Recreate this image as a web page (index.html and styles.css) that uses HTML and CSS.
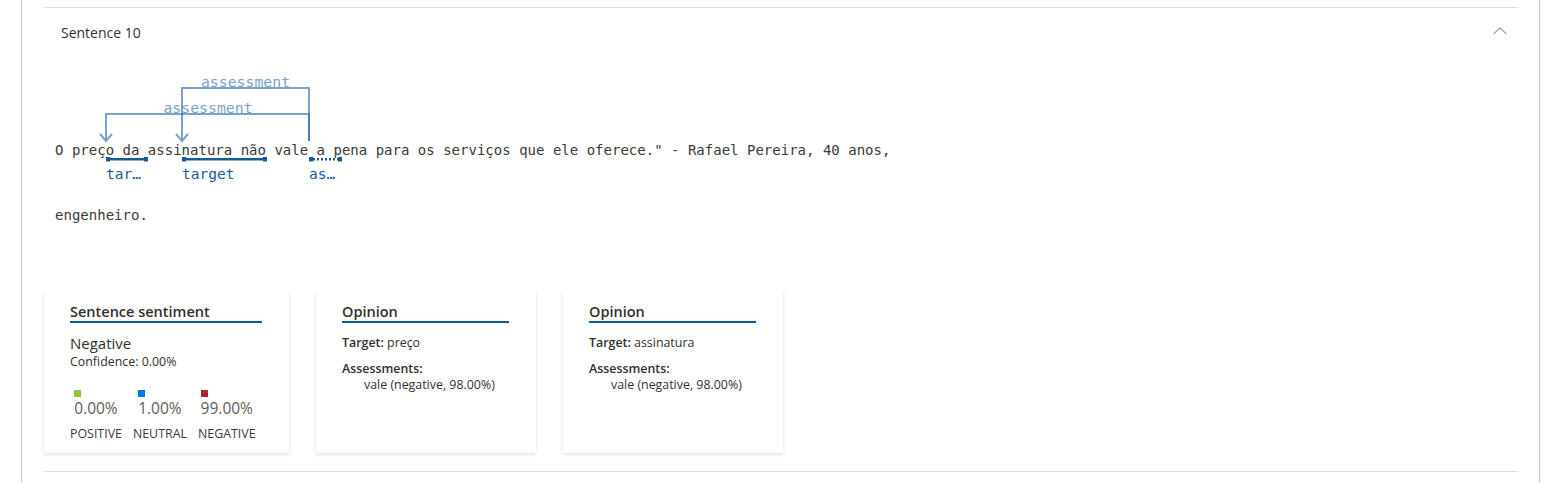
FILE: index.html
```html
<!DOCTYPE html>
<html>
<head>
<meta charset="utf-8">
<link rel="stylesheet" href="styles.css">
</head>
<body>
<div class="frame">
  <div class="section">
    <div class="header">
      <span class="title">Sentence 10</span>
      <svg class="chevron" width="14" height="8" viewBox="0 0 14 8"><path d="M0.5 7 L7 0.8 L13.5 7" fill="none" stroke="#605e5c" stroke-width="1"/></svg>
    </div>
    <div class="sentence">
      <div class="line line-annotated">
        <svg class="annot" width="420" height="140" viewBox="0 0 420 140">
          <g class="arcs" fill="none" stroke="#2b6cab" stroke-width="2" opacity="0.62">
            <path d="M138 81 V28 H265 V81"/>
            <path d="M132 74 L138 81 L144 74"/>
          </g>
          <text class="arc-label" x="201.5" y="27" text-anchor="middle">assessment</text>
          <g class="arcs" fill="none" stroke="#2b6cab" stroke-width="2" opacity="0.62">
            <path d="M62 81 V54 H265 V81"/>
            <path d="M56 74 L62 81 L68 74"/>
          </g>
          <text class="arc-label" x="164" y="53" text-anchor="middle">assessment</text>
          <g fill="#175a9b">
            <rect x="62" y="98" width="42" height="2.5"/>
            <rect x="62" y="97" width="4" height="4.5"/>
            <rect x="100" y="97" width="4" height="4.5"/>
            <rect x="138" y="98" width="85" height="2.5"/>
            <rect x="138" y="97" width="4" height="4.5"/>
            <rect x="219" y="97" width="4" height="4.5"/>
            <rect x="265" y="97" width="4" height="4.5"/>
            <rect x="294" y="97" width="4" height="4.5"/>
          </g>
          <line x1="269" y1="99.2" x2="294" y2="99.2" stroke="#175a9b" stroke-width="2.5" stroke-dasharray="2 2"/>
          <text class="tag-label" x="62" y="119">tar…</text>
          <text class="tag-label" x="138" y="119">target</text>
          <text class="tag-label" x="265" y="119">as…</text>
        </svg>
        <span class="mono">O preço da assinatura não vale a pena para os serviços que ele oferece." - Rafael Pereira, 40 anos,</span>
      </div>
      <div class="line">
        <span class="mono">engenheiro.</span>
      </div>
    </div>
    <div class="cards">
      <div class="card card-wide">
        <div class="card-title">Sentence sentiment</div>
        <div class="sent-label">Negative</div>
        <div class="small conf">Confidence: 0.00%</div>
        <div class="scores">
          <div class="score">
            <div class="score-top"><span class="swatch pos"></span><span class="pct">0.00%</span></div>
            <span class="cat">POSITIVE</span>
          </div>
          <div class="score">
            <div class="score-top"><span class="swatch neu"></span><span class="pct">1.00%</span></div>
            <span class="cat">NEUTRAL</span>
          </div>
          <div class="score">
            <div class="score-top"><span class="swatch neg"></span><span class="pct">99.00%</span></div>
            <span class="cat">NEGATIVE</span>
          </div>
        </div>
      </div>
      <div class="card">
        <div class="card-title">Opinion</div>
        <div class="small target"><b>Target:</b> preço</div>
        <div class="small assess"><b>Assessments:</b></div>
        <div class="small indent">vale (negative, 98.00%)</div>
      </div>
      <div class="card">
        <div class="card-title">Opinion</div>
        <div class="small target"><b>Target:</b> assinatura</div>
        <div class="small assess"><b>Assessments:</b></div>
        <div class="small indent">vale (negative, 98.00%)</div>
      </div>
    </div>
  </div>
</div>
</body>
</html>
```

FILE: styles.css
```css
html, body {
  margin: 0;
  padding: 0;
  background: #ffffff;
}
body {
  font-family: "Open Sans", "Noto Sans", sans-serif;
  color: #323130;
  height: 483px;
  overflow: hidden;
}
.frame {
  margin-left: 21px;
  width: 1519px;
  height: 483px;
  border-left: 1px solid #c8c6c4;
  border-right: 1px solid #c8c6c4;
  padding: 7px 21px 0 22px;
  box-sizing: border-box;
}
.section {
  border-top: 1px solid #e1dfdd;
  border-bottom: 1px solid #e1dfdd;
  height: 465px;
  box-sizing: border-box;
  display: flex;
  flex-direction: column;
}
.header {
  display: flex;
  align-items: center;
  justify-content: space-between;
  height: 48px;
  padding: 0 11px 0 17px;
}
.title {
  font-size: 14px;
  color: #323130;
}
.chevron {
  display: block;
  margin-top: -2px;
}
.sentence {
  padding-left: 11px;
  display: flex;
  flex-direction: column;
}
.line {
  height: 20px;
  line-height: 20px;
}
.line-annotated {
  position: relative;
  padding-top: 83px;
  padding-bottom: 45px;
}
.annot {
  position: absolute;
  left: -11px;
  top: 4px;
  overflow: visible;
}
.mono {
  font-family: "DejaVu Sans Mono", "Liberation Mono", monospace;
  font-size: 14px;
  color: #3b3a39;
  white-space: pre;
  position: relative;
  letter-spacing: 0.01px;
}
.arc-label {
  font-family: "DejaVu Sans Mono", monospace;
  font-size: 14.8px;
  fill: #2b6cab;
  opacity: 0.62;
}
.tag-label {
  font-family: "DejaVu Sans Mono", monospace;
  font-size: 14.5px;
  fill: #175a9b;
}
.cards {
  display: flex;
  gap: 27px;
  margin-top: 65px;
}
.card {
  width: 220px;
  height: 164px;
  box-sizing: border-box;
  padding: 14px 27px 0 26px;
  background: #fff;
  box-shadow: 0 1.6px 3.6px rgba(0,0,0,0.13), 0 0.3px 0.9px rgba(0,0,0,0.11);
}
.card-wide {
  width: 245px;
}
.card-title {
  font-size: 14.5px;
  font-weight: 600;
  color: #323130;
  line-height: 18px;
  border-bottom: 2px solid #0f5a9c;
  margin-bottom: 12px;
}
.sent-label {
  font-size: 15px;
  line-height: 17px;
  color: #323130;
}
.small {
  font-size: 12.4px;
  line-height: 16px;
  color: #323130;
}
.small b {
  font-weight: 600;
}
.conf {
  margin-top: 2px;
}
.target {
  margin-top: 1px;
}
.assess {
  margin-top: 10px;
}
.indent {
  padding-left: 22px;
}
.scores {
  display: flex;
  gap: 11px;
  margin-top: 20px;
}
.score {
  display: flex;
  flex-direction: column;
  align-items: center;
}
.score-top {
  display: flex;
  flex-direction: column;
  align-items: flex-start;
}
.swatch {
  width: 7px;
  height: 7px;
  display: block;
}
.pos { background: #95c23d; }
.neu { background: #0078d4; }
.neg { background: #a4262c; }
.pct {
  font-size: 15.5px;
  line-height: 20px;
  color: #605e5c;
  margin-top: 1px;
}
.cat {
  font-size: 12.4px;
  line-height: 18px;
  color: #3b3a39;
  margin-top: 7px;
}
```
